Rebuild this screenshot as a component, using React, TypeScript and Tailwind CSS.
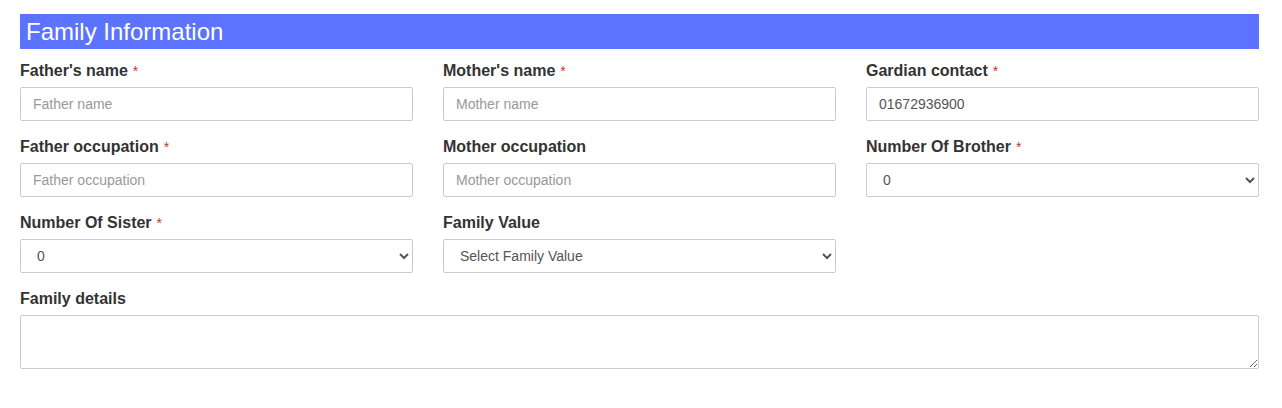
import React from 'react';

type Field = {
  label: string;
  required?: boolean;
  kind: 'input' | 'select';
  placeholder?: string;
  value?: string;
  options?: string[];
};

const fields: Field[] = [
  { label: "Father's name", required: true, kind: 'input', placeholder: 'Father name' },
  { label: "Mother's name", required: true, kind: 'input', placeholder: 'Mother name' },
  { label: 'Gardian contact', required: true, kind: 'input', value: '01672936900' },
  { label: 'Father occupation', required: true, kind: 'input', placeholder: 'Father occupation' },
  { label: 'Mother occupation', kind: 'input', placeholder: 'Mother occupation' },
  { label: 'Number Of Brother', required: true, kind: 'select', options: ['0', '1', '2', '3', '4', '5'] },
  { label: 'Number Of Sister', required: true, kind: 'select', options: ['0', '1', '2', '3', '4', '5'] },
  { label: 'Family Value', kind: 'select', options: ['Select Family Value', 'Traditional', 'Moderate', 'Liberal'] },
];

const controlClass =
  'w-full h-[34px] px-3 border border-[#cccccc] rounded-[2px] bg-white text-[14px] text-[#555555] outline-none placeholder:text-[#999999]';

function Label({ text, required }: { text: string; required?: boolean }) {
  return (
    <label className="block h-[22px] mb-[5px] text-[16px] leading-[22px] font-bold text-[#333333]">
      {text}
      {required && <span className="ml-[5px] text-[14px] font-normal text-[#c0392b]">*</span>}
    </label>
  );
}

export default function App() {
  return (
    <div className="w-[1282px] h-[408px] bg-white pl-[20px] pr-[23px] pt-[14px] font-['Liberation_Sans',Arial,sans-serif]">
      {/* Section heading */}
      <div className="h-[35px] bg-[#5b73ff] px-[6px] text-[24px] leading-[35px] text-white">
        Family Information
      </div>

      <div className="grid grid-cols-3 gap-x-[30px] gap-y-[15px] pt-[11px]">
        {fields.map((f) => (
          <div key={f.label}>
            <Label text={f.label} required={f.required} />
            {f.kind === 'input' ? (
              <input
                type="text"
                className={controlClass}
                placeholder={f.placeholder}
                defaultValue={f.value}
              />
            ) : (
              <select className={controlClass} defaultValue={f.options?.[0]}>
                {f.options?.map((o) => (
                  <option key={o}>{o}</option>
                ))}
              </select>
            )}
          </div>
        ))}

        <div className="col-span-3">
          <Label text="Family details" />
          <textarea className="block w-full h-[54px] px-3 py-2 border border-[#cccccc] rounded-[2px] text-[14px] text-[#555555] outline-none" />
        </div>
      </div>
    </div>
  );
}
